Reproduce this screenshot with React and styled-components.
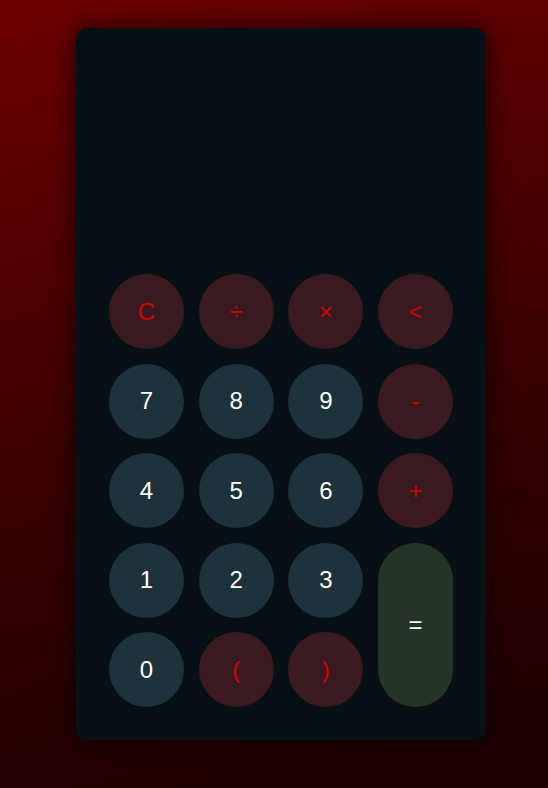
import React from "react";
import styled, { createGlobalStyle } from "styled-components";

const Global = createGlobalStyle`
  html, body { margin: 0; padding: 0; }
  body {
    min-height: 100vh;
    background: linear-gradient(165deg, #6e0000 0%, #3c0000 50%, #1a0000 100%);
    font-family: "Liberation Sans", Arial, sans-serif;
  }
`;

const Page = styled.div`
  display: flex;
  justify-content: center;
  padding-top: 28px;
  padding-left: 14px;
  min-height: 100vh;
  box-sizing: border-box;
`;

const Card = styled.div`
  width: 410px;
  height: 712px;
  box-sizing: border-box;
  background: #071015;
  border-radius: 12px;
  box-shadow: 0 0 22px 4px rgba(0, 0, 0, 0.55);
  padding: 33px;
  display: flex;
  flex-direction: column;
`;

const Display = styled.div`
  flex: 1;
  color: #fff;
  font-size: 36px;
  text-align: right;
`;

const Keys = styled.div`
  display: grid;
  grid-template-columns: repeat(4, 1fr);
  grid-auto-rows: 75px;
  column-gap: 14.67px;
  row-gap: 14.5px;
`;

const Key = styled.button`
  border: none;
  border-radius: 999px;
  font-family: "Liberation Sans", Arial, sans-serif;
  font-size: 24px;
  padding: 0;
  display: flex;
  align-items: center;
  justify-content: center;
  background: ${(p) =>
    p.$kind === "op" ? "#3a1a1f" : p.$kind === "eq" ? "#253427" : "#1e323b"};
  color: ${(p) => (p.$kind === "op" ? "#c80808" : "#ffffff")};
  grid-row: ${(p) => (p.$tall ? "span 2" : "auto")};
  cursor: pointer;
`;

const keys = [
  ["C", "op"], ["÷", "op"], ["×", "op"], ["<", "op"],
  ["7"], ["8"], ["9"], ["-", "op"],
  ["4"], ["5"], ["6"], ["+", "op"],
  ["1"], ["2"], ["3"], ["=", "eq", true],
  ["0"], ["(", "op"], [")", "op"],
];

export default function App() {
  return (
    <>
      <Global />
      <Page>
        <Card>
          <Display />
          <Keys>
            {keys.map(([label, kind, tall]) => (
              <Key key={label} $kind={kind} $tall={tall}>
                {label}
              </Key>
            ))}
          </Keys>
        </Card>
      </Page>
    </>
  );
}
